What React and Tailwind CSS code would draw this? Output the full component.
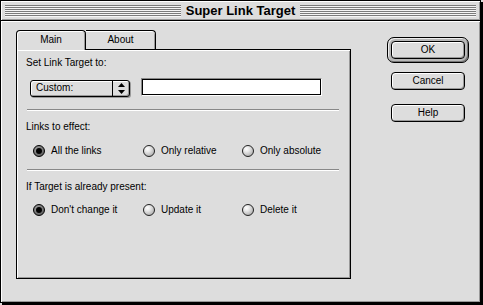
import React from "react";

function Radio({ checked, label }) {
  return (
    <div className="flex items-center gap-[6px] h-[14px]">
      {checked ? (
        <div className="w-[12px] h-[12px] rounded-full border border-black bg-[radial-gradient(circle_at_40%_35%,#aaa,#444)] flex items-center justify-center">
          <div className="w-[6px] h-[6px] rounded-full bg-black" />
        </div>
      ) : (
        <div className="w-[12px] h-[12px] rounded-full border border-[#222] bg-[radial-gradient(circle_at_35%_30%,#ffffff_0%,#e8e8e8_30%,#9a9a9a_100%)]" />
      )}
      <span className="leading-[12px]">{label}</span>
    </div>
  );
}

function Separator() {
  return (
    <div className="ml-[1px] w-[312px] flex flex-col">
      <div className="h-[1px] bg-[#888]" />
      <div className="h-[1px] bg-white" />
    </div>
  );
}

function Button({ children }) {
  return (
    <div className="w-[74px] h-[18px] rounded-[4px] border border-black bg-[#dddddd] shadow-[inset_1px_1px_0_#fff,inset_-1px_-1px_0_#999] flex items-center justify-center leading-none">
      {children}
    </div>
  );
}

export default function App() {
  return (
    <div className="w-[483px] h-[305px] bg-[#dddddd] text-black text-[10px] leading-none font-['Liberation_Sans',Arial,sans-serif]">
      <div className="w-[481px] h-[303px] border border-black shadow-[2px_2px_0_#000] flex flex-col">
        {/* Title bar */}
        <div className="h-[20px] border-b border-black bg-[#dddddd] shadow-[inset_1px_1px_0_#fff,inset_-1px_-1px_0_#999] flex items-center px-[4px] gap-[4px]">
          <div className="flex-1 h-[12px] bg-[repeating-linear-gradient(to_bottom,#7a7a7a_0px,#7a7a7a_1px,#f4f4f4_1px,#f4f4f4_2px)]" />
          <div className="text-[13px] font-bold leading-none px-[1px]">Super Link Target</div>
          <div className="flex-1 h-[12px] bg-[repeating-linear-gradient(to_bottom,#7a7a7a_0px,#7a7a7a_1px,#f4f4f4_1px,#f4f4f4_2px)]" />
        </div>

        {/* Content */}
        <div className="flex-1 flex shadow-[inset_1px_1px_0_#fff,inset_-1px_-1px_0_#999] pl-[15px] pt-[9px]">
          {/* Tabs + panel */}
          <div className="flex flex-col w-[335px]">
            <div className="flex h-[19px] items-end">
              <div className="relative z-10 -mb-[1px] w-[70px] h-[20px] rounded-t-[4px] border border-b-0 border-black bg-[#dddddd] shadow-[inset_1px_1px_0_#fff,inset_-1px_0_0_#999] flex items-center justify-center pb-[1px]">
                Main
              </div>
              <div className="w-[70px] h-[19px] rounded-tr-[4px] border border-l-0 border-b-0 border-black bg-[#dddddd] shadow-[inset_0_1px_0_#fff,inset_-1px_0_0_#999] flex items-center justify-center">
                About
              </div>
            </div>
            <div className="h-[230px] border border-black bg-[#dddddd] shadow-[inset_1px_1px_0_#fff,inset_-1px_-1px_0_#999] flex flex-col pl-[9px] pt-[7px]">
              <div className="h-[12px] leading-[12px]">Set Link Target to:</div>
              <div className="mt-[9px] h-[18px] flex items-center">
                <div className="ml-[4px] mt-[2px] w-[100px] h-[17px] rounded-[3px] border border-black bg-[#dddddd] shadow-[inset_1px_1px_0_#fff,inset_-1px_-1px_0_#999,1px_1px_0_#999] flex">
                  <div className="flex-1 flex items-center pl-[5px]">Custom:</div>
                  <div className="w-[17px] border-l border-black flex items-center justify-center">
                    <svg width="7" height="11" viewBox="0 0 7 11">
                      <path d="M3.5 0 L7 4 L0 4 Z" fill="#000" />
                      <path d="M0 7 L7 7 L3.5 11 Z" fill="#000" />
                    </svg>
                  </div>
                </div>
                <div className="ml-[11px] w-[181px] h-[18px] border-t border-l border-[#888] border-b border-r border-b-white border-r-white">
                  <div className="w-full h-full border border-black bg-white" />
                </div>
              </div>
              <div className="mt-[13px]">
                <Separator />
              </div>
              <div className="mt-[10px] h-[12px] leading-[12px]">Links to effect:</div>
              <div className="mt-[11px] ml-[7px] grid grid-cols-[110px_99px_1fr]">
                <Radio checked label="All the links" />
                <Radio label="Only relative" />
                <Radio label="Only absolute" />
              </div>
              <div className="mt-[11px]">
                <Separator />
              </div>
              <div className="mt-[10px] h-[12px] leading-[12px]">If Target is already present:</div>
              <div className="mt-[10px] ml-[7px] grid grid-cols-[110px_99px_1fr]">
                <Radio checked label="Don't change it" />
                <Radio label="Update it" />
                <Radio label="Delete it" />
              </div>
            </div>
          </div>

          {/* Buttons */}
          <div className="ml-[36px] mt-[7px] flex flex-col">
            <div className="w-[82px] h-[26px] rounded-[7px] border border-black bg-[#b8b8b8] shadow-[inset_1px_1px_0_#eee,inset_-1px_-1px_0_#777] p-[3px]">
              <Button>OK</Button>
            </div>
            <div className="ml-[4px] mt-[9px]">
              <Button>Cancel</Button>
            </div>
            <div className="ml-[4px] mt-[14px]">
              <Button>Help</Button>
            </div>
          </div>
        </div>
      </div>
    </div>
  );
}
